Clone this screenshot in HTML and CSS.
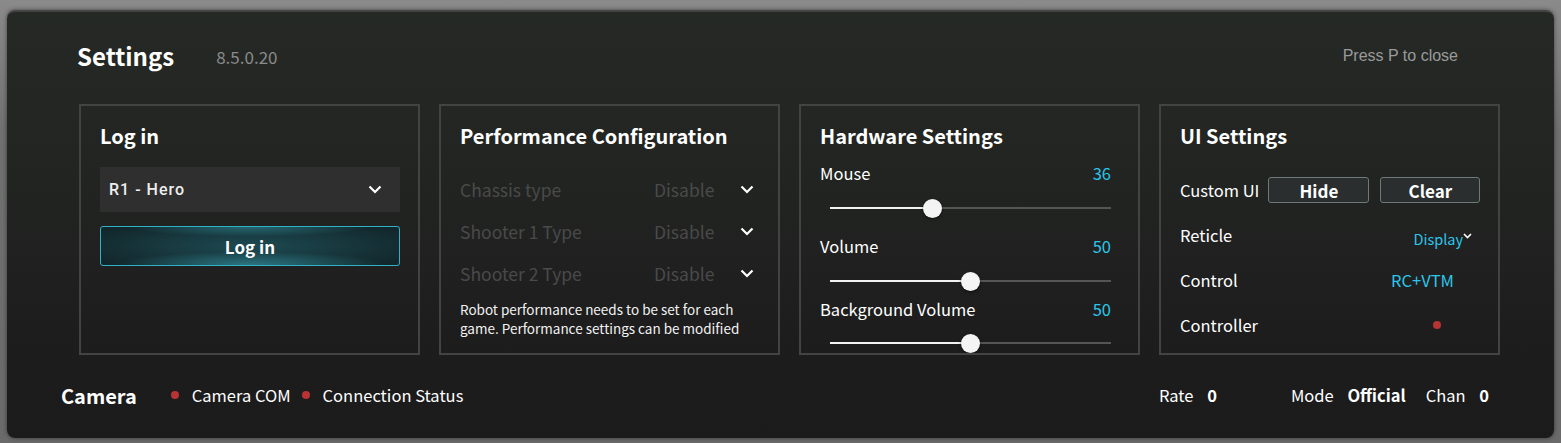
FILE: index.html
```html
<!DOCTYPE html>
<html lang="en">
<head>
<meta charset="utf-8">
<title>Settings</title>
<link rel="stylesheet" href="styles.css">
</head>
<body>
<div class="panel">
  <header class="head">
    <h1 class="title">Settings</h1>
    <span class="version">8.5.0.20</span>
    <span class="close-hint">Press P to close</span>
  </header>

  <div class="cards">
    <section class="card">
      <h2 class="card-title">Log in</h2>
      <div class="select">
        <span class="select-text">R1 - Hero</span>
        <svg class="chev" width="14" height="9" viewBox="0 0 14 9"><polyline points="1.5,1.5 7,7 12.5,1.5" fill="none" stroke="#fff" stroke-width="2.2"/></svg>
      </div>
      <button class="login-btn">Log in</button>
    </section>

    <section class="card">
      <h2 class="card-title">Performance Configuration</h2>
      <div class="perf-list">
        <div class="perf-row">
          <span class="perf-label">Chassis type</span>
          <span class="perf-value">Disable</span>
          <svg class="chev" width="14" height="9" viewBox="0 0 14 9"><polyline points="1.5,1.5 7,7 12.5,1.5" fill="none" stroke="#fff" stroke-width="2.2"/></svg>
        </div>
        <div class="perf-row">
          <span class="perf-label">Shooter 1 Type</span>
          <span class="perf-value">Disable</span>
          <svg class="chev" width="14" height="9" viewBox="0 0 14 9"><polyline points="1.5,1.5 7,7 12.5,1.5" fill="none" stroke="#fff" stroke-width="2.2"/></svg>
        </div>
        <div class="perf-row">
          <span class="perf-label">Shooter 2 Type</span>
          <span class="perf-value">Disable</span>
          <svg class="chev" width="14" height="9" viewBox="0 0 14 9"><polyline points="1.5,1.5 7,7 12.5,1.5" fill="none" stroke="#fff" stroke-width="2.2"/></svg>
        </div>
      </div>
      <p class="perf-note">Robot performance needs to be set for each game. Performance settings can be modified</p>
    </section>

    <section class="card">
      <h2 class="card-title">Hardware Settings</h2>
      <div class="hw-row hw-row-a"><span>Mouse</span><span class="accent">36</span></div>
      <div class="slider slider-a"><div class="slider-fill" style="width:36.4%"></div><div class="slider-thumb" style="left:36.4%"></div></div>
      <div class="hw-row"><span>Volume</span><span class="accent">50</span></div>
      <div class="slider slider-b"><div class="slider-fill" style="width:50%"></div><div class="slider-thumb" style="left:50%"></div></div>
      <div class="hw-row"><span>Background Volume</span><span class="accent">50</span></div>
      <div class="slider slider-c"><div class="slider-fill" style="width:50%"></div><div class="slider-thumb" style="left:50%"></div></div>
    </section>

    <section class="card card-ui">
      <h2 class="card-title">UI Settings</h2>
      <div class="ui-row ui-row-first">
        <span class="ui-label">Custom UI</span>
        <button class="ghost-btn">Hide</button>
        <button class="ghost-btn">Clear</button>
      </div>
      <div class="ui-row">
        <span>Reticle</span>
        <span class="ui-val ui-val-display accent">Display<svg class="mini-chev" width="9" height="6" viewBox="0 0 9 6"><polyline points="1,1 4.5,4.5 8,1" fill="none" stroke="#fff" stroke-width="1.6"/></svg></span>
      </div>
      <div class="ui-row">
        <span>Control</span>
        <span class="ui-val ui-val-control accent">RC+VTM</span>
      </div>
      <div class="ui-row">
        <span>Controller</span>
        <span class="ui-val ui-val-dot"><i class="dot"></i></span>
      </div>
    </section>
  </div>

  <footer class="foot">
    <span class="foot-title">Camera</span>
    <span class="status"><i class="dot"></i>Camera COM</span>
    <span class="status"><i class="dot"></i>Connection Status</span>
    <span class="foot-spacer"></span>
    <span class="stat stat-rate">Rate <b>0</b></span>
    <span class="stat stat-mode">Mode <b>Official</b></span>
    <span class="stat">Chan <b>0</b></span>
  </footer>
</div>
</body>
</html>
```

FILE: styles.css
```css
* { box-sizing: border-box; }
html, body { margin: 0; padding: 0; }
body {
  width: 1561px;
  height: 443px;
  overflow: hidden;
  background: linear-gradient(#8a8a8a, #707070 30%, #6a6a6a);
  font-family: "Noto Sans CJK SC", "Noto Sans", sans-serif;
  color: #fff;
  padding: 10px 7px 5px 7px;
}
.panel {
  height: 428px;
  border-radius: 8px;
  border-top: 2px solid #444;
  background: linear-gradient(#252925 0%, #222422 40%, #1d1d1d 75%, #1b1b1b 100%);
  box-shadow: 0 0 4px rgba(0,0,0,0.5);
  display: flex;
  flex-direction: column;
}
.head {
  display: flex;
  align-items: flex-start;
  padding: 28px 96px 0 70px;
  height: 92px;
}
.title {
  margin: 0;
  font-size: 24px;
  font-weight: 700;
  line-height: 32px;
}
.version {
  margin: 5px 0 0 42px;
  font-size: 17px;
  line-height: 24px;
  color: #8a8a8a;
}
.close-hint {
  margin: 6px 0 0 auto;
  font-family: "Liberation Sans", Arial, sans-serif;
  font-size: 16px;
  line-height: 20px;
  color: #9a9a9a;
}
.cards {
  display: grid;
  grid-template-columns: 341px 341px 341px 341px;
  column-gap: 19px;
  padding-left: 72px;
}
.card {
  height: 251px;
  border: 2px solid #434343;
  padding: 12px 18px 0 19px;
  overflow: hidden;
}
.card-ui { padding-right: 16px; }
.card-title {
  margin: 0;
  font-size: 20px;
  font-weight: 700;
  line-height: 36px;
}
.select {
  margin-top: 13px;
  height: 45px;
  background: #2f2f2f;
  display: flex;
  align-items: center;
  padding: 0 18px 0 9px;
  justify-content: space-between;
}
.select-text {
  font-family: Roboto, sans-serif;
  font-weight: 500;
  font-size: 16px;
  letter-spacing: 1px;
  color: #eee;
}
.chev { display: block; }
.login-btn {
  margin-top: 14px;
  width: 100%;
  height: 40px;
  border: 1px solid #2fb2c6;
  border-radius: 3px;
  color: #fff;
  font-family: "Noto Sans CJK SC", "Noto Sans", sans-serif;
  font-size: 17px;
  font-weight: 700;
  background:
    radial-gradient(ellipse 45% 35% at 50% 100%, rgba(70,200,220,0.45), transparent),
    radial-gradient(ellipse 40% 25% at 50% 0%, rgba(70,200,220,0.35), transparent),
    radial-gradient(ellipse 60% 70% at 50% 50%, #1d4a52, #12272b);
}
.perf-list { margin-top: 14px; }
.perf-row {
  display: flex;
  align-items: center;
  height: 42px;
  font-size: 17.5px;
  color: #4a4a4a;
}
.perf-label { width: 194px; }
.perf-value { width: 86px; }
.perf-note {
  margin: 6px 0 0;
  font-size: 13.5px;
  line-height: 19px;
  color: #f2f2f2;
}
.hw-row {
  display: flex;
  justify-content: space-between;
  font-size: 16.5px;
  line-height: 24px;
  padding-right: 9px;
}
.hw-row-a { margin-top: 7px; }
.accent { color: #2cc6ea; }
.slider {
  position: relative;
  height: 2px;
  margin: 22px 9px 0 10px;
  background: #555;
}
.slider-a { margin-bottom: 25px; }
.slider-b { margin-bottom: 15px; }
.slider-c { margin-top: 21px; }
.slider-fill {
  height: 2px;
  background: #f2f2f2;
}
.slider-thumb {
  position: absolute;
  top: 50%;
  width: 19px;
  height: 19px;
  margin: -9.5px 0 0 -9.5px;
  border-radius: 50%;
  background: #f4f4f4;
  box-shadow: 0 1px 3px rgba(0,0,0,0.6);
}
.ui-row {
  display: flex;
  align-items: center;
  height: 45px;
  font-size: 16.5px;
  white-space: nowrap;
}
.ui-row-first { margin-top: 22px; height: 28px; margin-bottom: 8px; }
.ui-label { flex-shrink: 0; }
.ghost-btn {
  flex-shrink: 0;
  height: 26px;
  width: 101px;
  margin-left: 9px;
  border: 1px solid #6c7a78;
  border-radius: 3px;
  background: #2a2e2e;
  color: #fff;
  font-family: "Noto Sans CJK SC", "Noto Sans", sans-serif;
  font-size: 17px;
  font-weight: 700;
  padding: 0;
}
.ghost-btn + .ghost-btn { margin-left: 11px; width: 100px; }
.ui-val { margin-left: auto; display: flex; align-items: center; }
.ui-val-display { font-size: 14.5px; padding-top: 8px; margin-right: 10px; }
.mini-chev { margin-top: -6px; }
.ui-val-control { margin-right: 28px; }
.ui-val-dot { margin-right: 41px; }
.dot {
  display: inline-block;
  width: 8px;
  height: 8px;
  border-radius: 50%;
  background: #b83434;
}
.foot {
  display: flex;
  align-items: center;
  height: 80px;
  padding: 0 65px 0 54px;
  font-size: 16.5px;
}
.foot-title {
  font-size: 20px;
  font-weight: 700;
  margin-right: 34px;
}
.status { display: flex; align-items: center; margin-right: 11px; }
.status .dot { margin-right: 13px; }
.foot-spacer { flex: 1; }
.stat b { font-weight: 700; margin-left: 10px; }
.stat-rate { margin-right: 74px; }
.stat-mode { margin-right: 20px; }
```
